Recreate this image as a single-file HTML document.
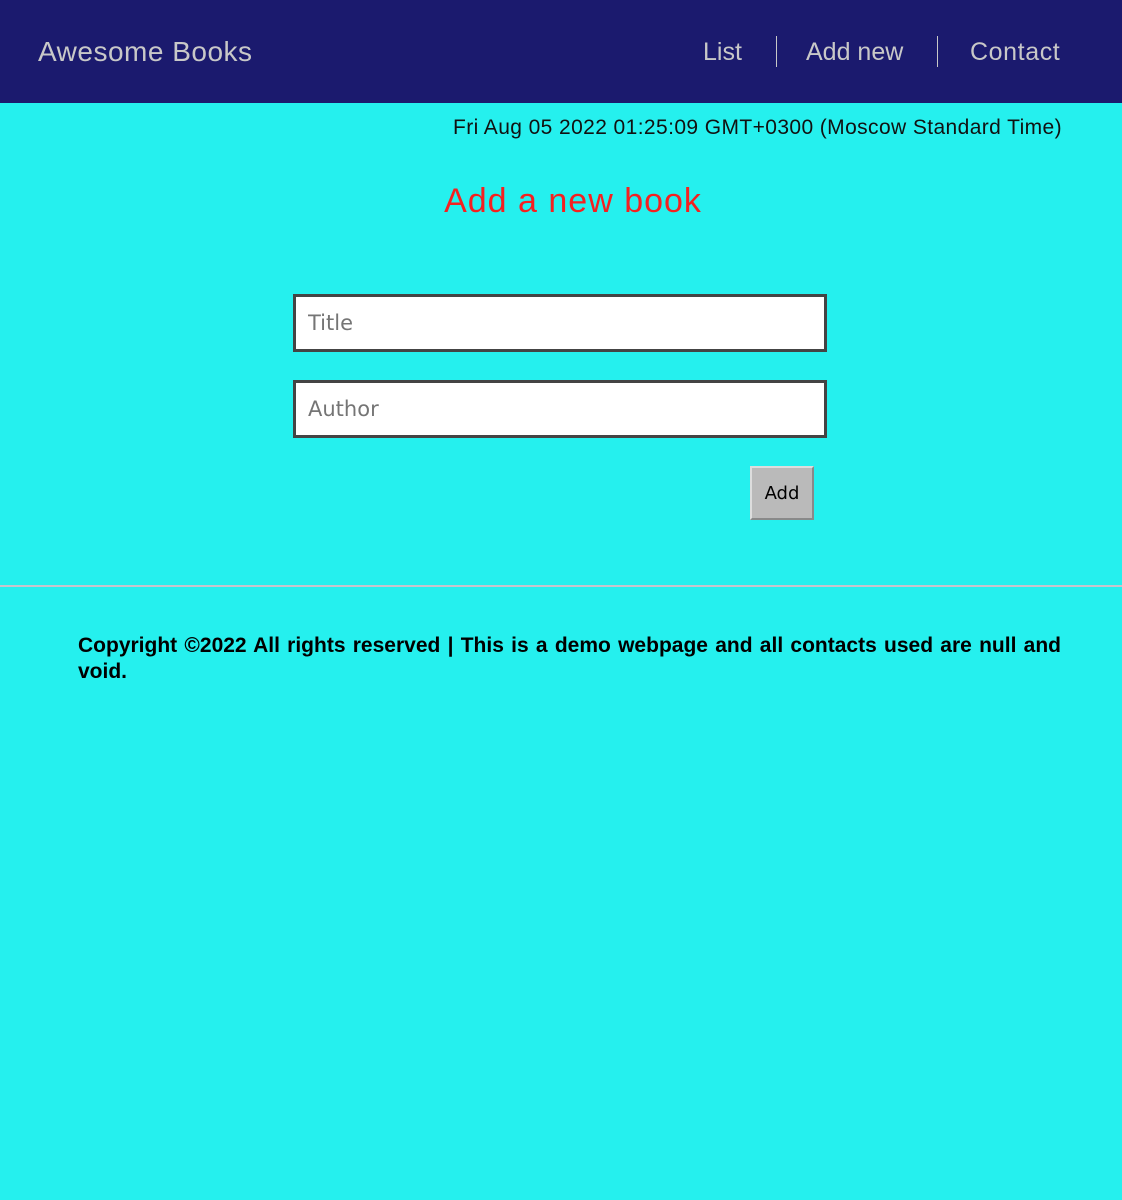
<!DOCTYPE html>
<html><head><style>
body{margin:0;background:#25f0ee;font-family:"Liberation Sans",sans-serif;width:1122px;height:1200px;position:relative;overflow:hidden}
.hdr{position:absolute;left:0;top:0;width:1122px;height:103px;background:#1b1a6e;color:#c8c8c8}
.a{position:absolute;white-space:nowrap}
.sep{position:absolute;top:36px;width:1px;height:31px;background:#c8c8c8}
input{position:absolute;left:293px;width:534px;height:58px;box-sizing:border-box;border:3px solid #444;background:#fff;font-family:"DejaVu Sans",sans-serif;font-size:21px;padding:0 12px;color:#777}
</style></head><body>
<div class="hdr">
<div class="a" style="left:38px;top:36px;font-size:28px;letter-spacing:0.5px">Awesome Books</div>
<div class="a" style="left:703px;top:38px;font-size:25px">List</div>
<div class="sep" style="left:776px"></div>
<div class="a" style="left:806px;top:38px;font-size:25px">Add new</div>
<div class="sep" style="left:937px"></div>
<div class="a" style="left:970px;top:38px;font-size:25px;letter-spacing:0.6px">Contact</div>
</div>
<div class="a" style="right:60px;top:116px;font-size:21px;letter-spacing:0.4px;color:#111">Fri Aug 05 2022 01:25:09 GMT+0300 (Moscow Standard Time)</div>
<div class="a" style="left:0;width:1146px;text-align:center;top:182px;font-size:34px;color:#f52020;letter-spacing:1px">Add a new book</div>
<input style="top:294px" placeholder="Title">
<input style="top:380px" placeholder="Author">
<div class="a" style="left:750px;top:466px;width:64px;height:54px;box-sizing:border-box;border:2px outset #ddd;background:#bababa;font-family:'DejaVu Sans',sans-serif;font-size:18px;text-align:center;line-height:52px;color:#000">Add</div>
<div class="a" style="left:0;top:585px;width:1122px;height:2px;background:#c8c4cc"></div>
<div class="a" style="left:78px;top:633px;width:983px;white-space:normal;text-align:justify;font-size:21px;letter-spacing:0px;font-weight:bold;line-height:26px;color:#000">Copyright ©2022 All rights reserved | This is a demo webpage and all contacts used are null and void.</div>
</body></html>
